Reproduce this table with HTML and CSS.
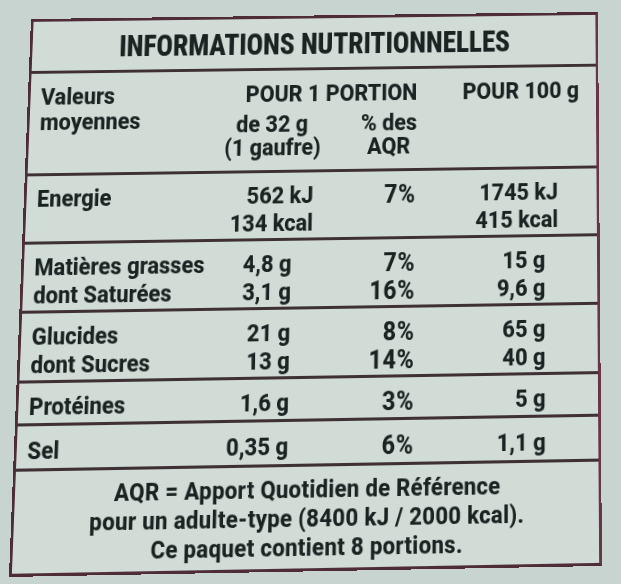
FILE: index.html
```html
<!DOCTYPE html>
<html lang="fr">
<head>
<meta charset="utf-8">
<title>Informations nutritionnelles</title>
<link rel="stylesheet" href="styles.css">
</head>
<body>
<div class="label">
  <h1 class="title">INFORMATIONS NUTRITIONNELLES</h1>

  <div class="sec sec-head">
    <div class="lbl head-lbl">Valeurs<br>moyennes</div>
    <div class="portion">
      <div class="portion-title">POUR 1 PORTION</div>
      <div class="portion-sub">
        <div class="qty">de 32 g<br>(1 gaufre)</div>
        <div class="aqr">% des<br>AQR</div>
      </div>
    </div>
    <div class="hundred">POUR 100 g</div>
  </div>

  <div class="sec sec-two">
    <div class="lbl">Energie</div>
    <div class="v2 kj">562 kJ<br>134 kcal</div>
    <div class="pct">7%</div>
    <div class="v4 kj">1745 kJ<br>415 kcal</div>
  </div>

  <div class="sec sec-two">
    <div class="lbl">Matières grasses<br>dont Saturées</div>
    <div class="v2">4,8 g<br>3,1 g</div>
    <div class="pct">7%<br>16%</div>
    <div class="v4">15 g<br>9,6 g</div>
  </div>

  <div class="sec sec-two">
    <div class="lbl">Glucides<br>dont Sucres</div>
    <div class="v2">21 g<br>13 g</div>
    <div class="pct">8%<br>14%</div>
    <div class="v4">65 g<br>40 g</div>
  </div>

  <div class="sec sec-one">
    <div class="lbl">Protéines</div>
    <div class="v2">1,6 g</div>
    <div class="pct">3%</div>
    <div class="v4">5 g</div>
  </div>

  <div class="sec sec-sel">
    <div class="lbl">Sel</div>
    <div class="v2">0,35 g</div>
    <div class="pct">6%</div>
    <div class="v4">1,1 g</div>
  </div>

  <div class="foot">
    AQR = Apport Quotidien de Référence<br>
    pour un adulte-type (8400 kJ / 2000 kcal).<br>
    Ce paquet contient 8 portions.
  </div>
</div>
</body>
</html>
```

FILE: styles.css
```css
html, body {
  margin: 0;
  padding: 0;
}

body {
  width: 621px;
  height: 584px;
  overflow: hidden;
  background: #c8d4cf;
  font-family: Roboto, "Liberation Sans", sans-serif;
  font-weight: 800;
  color: #1a2321;
}

/* Laid out in a flat 638x556 frame, then projected onto the photographed,
   slightly tilted label (the projection also narrows the glyphs). */
.label {
  width: 638px;
  height: 556px;
  box-sizing: border-box;
  border: 3px solid #4e2d39;
  border-left-width: 3.4px;
  border-right-width: 3.4px;
  border-right-color: #6a3447;
  background: #d1dcd7;
  display: flex;
  flex-direction: column;
  white-space: nowrap;
  transform-origin: 0 0;
  transform: matrix3d(0.894676, -0.010842, 0, 0.00000995,
                      -0.040358, 0.957973, 0, -0.00007894,
                      0, 0, 1, 0,
                      31, 19, 0, 1);
}

.title {
  margin: 0;
  height: 54px;
  flex: none;
  box-sizing: border-box;
  border-bottom: 3px solid #3e3035;
  display: flex;
  align-items: center;
  justify-content: center;
  padding-top: 2px;
  font-size: 31px;
  letter-spacing: -0.2px;
  font-stretch: condensed;
  font-weight: 800;
}

.sec {
  flex: none;
  display: grid;
  grid-template-columns: 217px 110px 132px 173px;
  box-sizing: border-box;
  border-bottom: 3px solid #3e3035;
  font-size: 24px;
  line-height: 27.5px;
}

.sec-head {
  height: 105px;
  padding-top: 9.5px;
  line-height: 28px;
}

.sec-two {
  height: 69px;
  padding-top: 10px;
}

.sec-one {
  height: 42px;
  padding-top: 9.5px;
}

.sec-sel {
  height: 44px;
  padding-top: 10.5px;
}

.lbl {
  padding-left: 11.6px;
}

.head-lbl {
  line-height: 26.5px;
  padding-top: 1px;
}

.portion {
  grid-column: 2 / 4;
}

.portion-title {
  text-align: right;
  padding-right: 27.5px;
}

.portion-sub {
  display: grid;
  grid-template-columns: 110px 132px;
  margin-top: 5px;
  line-height: 24px;
}

.qty {
  text-align: center;
  padding-right: 4.4px;
}

.aqr {
  text-align: center;
  padding-left: 14px;
}

.hundred {
  text-align: right;
  padding-right: 19px;
}

.v2 {
  text-align: right;
  padding-right: 33px;
}

.v2.kj {
  padding-right: 10px;
}

.pct {
  text-align: right;
  padding-right: 28.6px;
  font-size: 25.5px;
  letter-spacing: 0.6px;
}

.v4 {
  text-align: right;
  padding-right: 57.5px;
}

.v4.kj {
  padding-right: 43px;
}

.foot {
  flex: 1;
  text-align: center;
  font-size: 24px;
  line-height: 28px;
  padding-top: 8px;
  letter-spacing: 0.3px;
}
```
